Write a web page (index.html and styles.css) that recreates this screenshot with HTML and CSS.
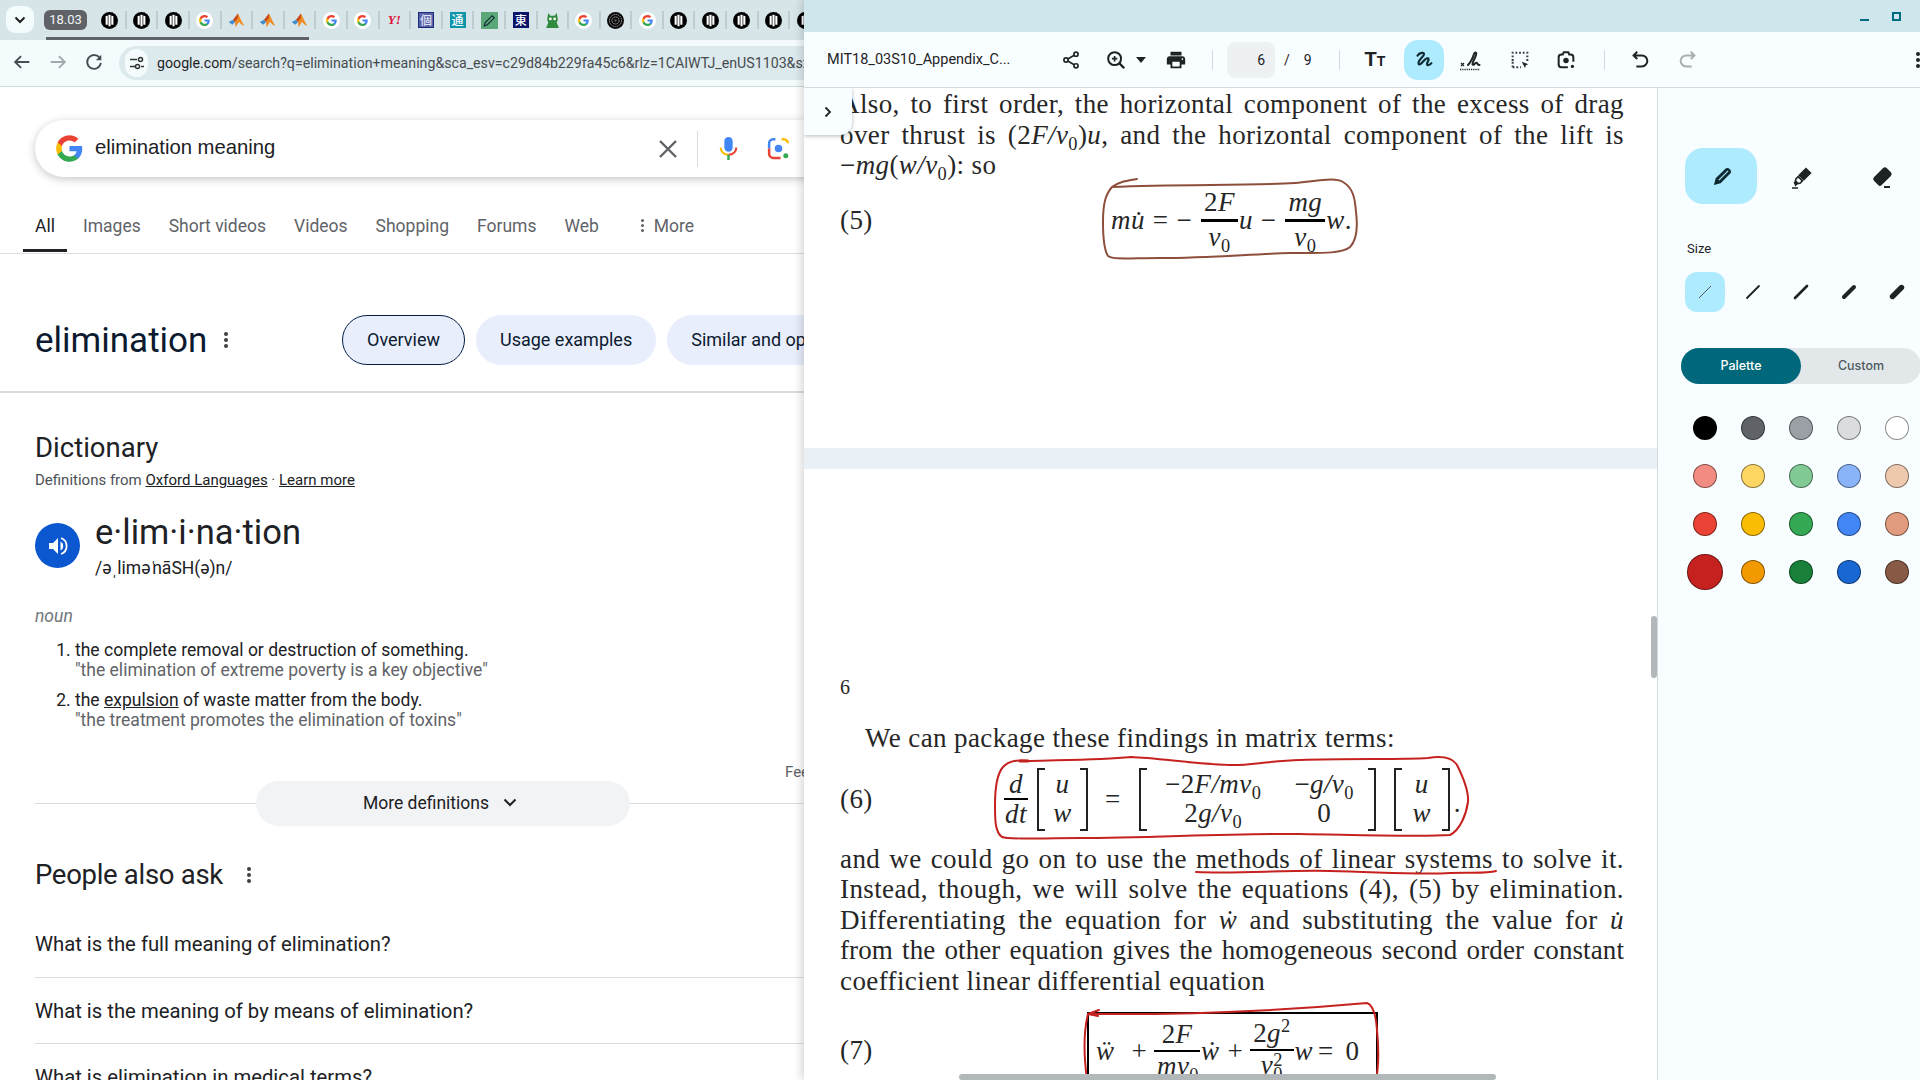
FILE: index.html
```html
<!DOCTYPE html>
<html lang="en">
<head>
    <meta charset="UTF-8">
    <title>elimination meaning</title>
    <link rel="stylesheet" href="styles.css">
</head>
<body>
<svg class="defs" width="0" height="0">
    <symbol id="fav-g" viewBox="0 0 24 24">
        <circle cx="12" cy="12" r="12" fill="#fff"/>
        <g transform="translate(3.6 3.6) scale(.7)">
            <path fill="#4285F4" d="M22.56 12.25c0-.78-.07-1.53-.2-2.25H12v4.26h5.92c-.26 1.37-1.04 2.53-2.21 3.31v2.77h3.57c2.08-1.92 3.28-4.74 3.28-8.09z"/>
            <path fill="#34A853" d="M12 23c2.97 0 5.46-.98 7.28-2.66l-3.57-2.77c-.98.66-2.23 1.06-3.71 1.06-2.86 0-5.29-1.93-6.16-4.53H2.18v2.84C3.99 20.53 7.7 23 12 23z"/>
            <path fill="#FBBC05" d="M5.84 14.09c-.22-.66-.35-1.36-.35-2.09s.13-1.43.35-2.09V7.07H2.18C1.43 8.55 1 10.22 1 12s.43 3.45 1.18 4.93l2.85-2.22.81-.62z"/>
            <path fill="#EA4335" d="M12 5.38c1.62 0 3.06.56 4.21 1.64l3.15-3.15C17.45 2.09 14.97 1 12 1 7.7 1 3.99 3.47 2.18 7.07l3.66 2.84c.87-2.6 3.3-4.53 6.16-4.53z"/>
        </g>
    </symbol>
    <symbol id="logo-g" viewBox="0 0 24 24">
        <path fill="#4285F4" d="M22.56 12.25c0-.78-.07-1.53-.2-2.25H12v4.26h5.92c-.26 1.37-1.04 2.53-2.21 3.31v2.77h3.57c2.08-1.92 3.28-4.74 3.28-8.09z"/>
        <path fill="#34A853" d="M12 23c2.97 0 5.46-.98 7.28-2.66l-3.57-2.77c-.98.66-2.23 1.06-3.71 1.06-2.86 0-5.29-1.93-6.16-4.53H2.18v2.84C3.99 20.53 7.7 23 12 23z"/>
        <path fill="#FBBC05" d="M5.84 14.09c-.22-.66-.35-1.36-.35-2.09s.13-1.43.35-2.09V7.07H2.18C1.43 8.55 1 10.22 1 12s.43 3.45 1.18 4.93l2.85-2.22.81-.62z"/>
        <path fill="#EA4335" d="M12 5.38c1.62 0 3.06.56 4.21 1.64l3.15-3.15C17.45 2.09 14.97 1 12 1 7.7 1 3.99 3.47 2.18 7.07l3.66 2.84c.87-2.6 3.3-4.53 6.16-4.53z"/>
    </symbol>
    <symbol id="fav-bars" viewBox="0 0 24 24">
        <circle cx="12" cy="12" r="12" fill="#000"/>
        <path d="M6.500 6v12h3V5zM10.500 4v16h3V4zM14.500 5v13h3V6z" fill="#fff"/>
    </symbol>
    <symbol id="fav-matlab" viewBox="0 0 24 24">
        <path d="M1 14l6-3 3 3-4 4z" fill="#3f8ecf"/>
        <path d="M7 11l7-9 2 6-6 6z" fill="#c8481c"/>
        <path d="M14 2c3 5 5 12 9 17-3 0-5-2-7-5-2 1-3 4-5 7-1-3-1-5-1-7l4-6z" fill="#ef8b22"/>
    </symbol>
    <symbol id="fav-spiral" viewBox="0 0 24 24">
        <circle cx="12" cy="12" r="12" fill="#050505"/>
        <circle cx="12" cy="12" r="8.500" fill="none" stroke="#aaa" stroke-width="1.400" stroke-dasharray="2 1"/>
        <circle cx="12" cy="12" r="5" fill="none" stroke="#bbb" stroke-width="1.400" stroke-dasharray="2 1"/>
        <circle cx="12" cy="12" r="1.800" fill="#555"/>
    </symbol>
</svg>

<div class="browser">
    <div class="tabstrip">
        <div class="tab-search"><svg width="12" height="8" viewBox="0 0 12 8"><path d="M1.5 1.5L6 6l4.5-4.5" fill="none" stroke="#1f1f1f" stroke-width="2"/></svg></div>
        <div class="tab-group">18.03</div>
        <div class="fav-list">
            <span class="fav"><svg><use href="#fav-bars"/></svg></span>
            <span class="fav"><svg><use href="#fav-bars"/></svg></span>
            <span class="fav"><svg><use href="#fav-bars"/></svg></span>
            <span class="fav"><svg><use href="#fav-g"/></svg></span>
            <span class="fav"><svg><use href="#fav-matlab"/></svg></span>
            <span class="fav"><svg><use href="#fav-matlab"/></svg></span>
            <span class="fav"><svg><use href="#fav-matlab"/></svg></span>
            <span class="fav"><svg><use href="#fav-g"/></svg></span>
            <span class="fav"><svg><use href="#fav-g"/></svg></span>
            <span class="fav"><b class="fav-yahoo">Y!</b></span>
            <span class="fav"><b class="fav-kanji fav-navy-box">個</b></span>
            <span class="fav"><b class="fav-kanji fav-teal">通</b></span>
            <span class="fav"><svg viewBox="0 0 16 16"><rect width="16" height="16" fill="#5aa877"/><path d="M3 13l1-3 6.500-6.500 2 2L6 12z" fill="none" stroke="#123" stroke-width="1"/></svg></span>
            <span class="fav"><b class="fav-kanji fav-navy">東</b></span>
            <span class="fav"><svg viewBox="0 0 16 16"><path d="M4 1l2 2.500h4L12 1l1 6-1 3 2 5H2l2-5-1-3z" fill="#2e8b3d"/><circle cx="6" cy="6.500" r="1.300" fill="#fff"/><circle cx="10" cy="6.500" r="1.300" fill="#fff"/></svg></span>
            <span class="fav"><svg><use href="#fav-g"/></svg></span>
            <span class="fav"><svg><use href="#fav-spiral"/></svg></span>
            <span class="fav"><svg><use href="#fav-g"/></svg></span>
            <span class="fav"><svg><use href="#fav-bars"/></svg></span>
            <span class="fav"><svg><use href="#fav-bars"/></svg></span>
            <span class="fav"><svg><use href="#fav-bars"/></svg></span>
            <span class="fav"><svg><use href="#fav-bars"/></svg></span>
            <span class="fav"><svg><use href="#fav-bars"/></svg></span>
        </div>
        <div class="tab-active-line"></div>
    </div>

    <div class="navbar">
        <svg class="nav-ico" viewBox="0 0 24 24"><path d="M20 12H5M11 5.500L4.500 12l6.500 6.500" fill="none" stroke="#474c50" stroke-width="2"/></svg>
        <svg class="nav-ico" viewBox="0 0 24 24"><path d="M4 12h15M13 5.500l6.500 6.500-6.500 6.500" fill="none" stroke="#a3a9ac" stroke-width="2"/></svg>
        <svg class="nav-ico" viewBox="0 0 24 24"><path d="M18.500 8A7.500 7.500 0 1 0 19.500 13" fill="none" stroke="#474c50" stroke-width="2"/><path d="M20 4v6h-6z" fill="#474c50"/></svg>
        <div class="addr">
            <span class="addr-info"><svg width="16" height="16" viewBox="0 0 16 16"><path d="M1 4.500h7M12 11.500h3M1 11.500h5" stroke="#333" stroke-width="1.500"/><circle cx="11.500" cy="4.500" r="2" fill="none" stroke="#333" stroke-width="1.500"/><circle cx="8.500" cy="11.500" r="2" fill="none" stroke="#333" stroke-width="1.500"/></svg></span>
            <span class="addr-url"><span class="addr-host">google.com</span>/search?q=elimination+meaning&amp;sca_esv=c29d84b229fa45c6&amp;rlz=1CAIWTJ_enUS1103&amp;sxsrf=ADLYWIJ</span>
        </div>
    </div>

    <div class="serp">
        <div class="searchbox">
            <svg class="sb-logo"><use href="#logo-g"/></svg>
            <span class="sb-text">elimination meaning</span>
            <svg class="sb-x" viewBox="0 0 22 22"><path d="M3 3l16 16M19 3L3 19" stroke="#5f6368" stroke-width="2.400"/></svg>
            <span class="sb-div"></span>
            <svg class="sb-ico" viewBox="0 0 24 24"><rect x="8" y="1" width="8" height="14" rx="4" fill="#4285f4"/><path d="M4.500 11c0 4 3.300 7 7.500 7" fill="none" stroke="#fbbc04" stroke-width="2"/><path d="M19.500 11c0 4-3.300 7-7.500 7" fill="none" stroke="#ea4335" stroke-width="2"/><path d="M12 18v5" stroke="#34a853" stroke-width="2.400"/></svg>
            <svg class="sb-ico sb-lens" viewBox="0 0 24 24"><path d="M3 12V7a4 4 0 0 1 4-4h2" fill="none" stroke="#4285f4" stroke-width="2.400"/><path d="M15 3h2a4 4 0 0 1 4 4" fill="none" stroke="#fbbc04" stroke-width="2.400"/><path d="M3 12v5a4 4 0 0 0 4 4h7" fill="none" stroke="#ea4335" stroke-width="2.400"/><circle cx="12" cy="12" r="3.600" fill="#4285f4"/><circle cx="19" cy="19" r="2.400" fill="#34a853"/></svg>
        </div>

        <div class="navtabs">
            <span class="navtab navtab-on">All</span>
            <span class="navtab">Images</span>
            <span class="navtab">Short videos</span>
            <span class="navtab">Videos</span>
            <span class="navtab">Shopping</span>
            <span class="navtab">Forums</span>
            <span class="navtab">Web</span>
            <span class="navtab navtab-more"><i class="dots dots-grey"></i>More</span>
        </div>

        <div class="headrow">
            <div class="head-title">
                <h1>elimination</h1>
                <i class="dots"></i>
            </div>
            <span class="chip chip-on">Overview</span>
            <span class="chip">Usage examples</span>
            <span class="chip">Similar and opposite words</span>
        </div>
        <div class="head-rule"></div>

        <div class="section">
            <h2>Dictionary</h2>
            <div class="source">Definitions from <u>Oxford Languages</u> · <u>Learn more</u></div>
            <div class="entry">
                <span class="speaker"><svg width="24" height="24" viewBox="0 0 24 24"><path d="M3 9v6h4l5 5V4L7 9z" fill="#fff"/><path d="M14.500 7.500a5 5 0 0 1 0 9z" fill="#fff"/><path d="M15 4a8.500 8.500 0 0 1 0 16" fill="none" stroke="#fff" stroke-width="1.800"/></svg></span>
                <div>
                    <div class="word">e·lim·i·na·tion</div>
                    <div class="phonetic">/əˌlimə<span class="stress">ˈ</span>nāSH(ə)n/</div>
                </div>
            </div>
            <div class="pos">noun</div>
            <ol class="defs-list">
                <li>the complete removal or destruction of something.<span class="example">"the elimination of extreme poverty is a key objective"</span></li>
                <li>the <u>expulsion</u> of waste matter from the body.<span class="example">"the treatment promotes the elimination of toxins"</span></li>
            </ol>
            <div class="feedback">Feedback</div>
            <div class="more-row">
                <span class="more-pill">More definitions <svg width="14" height="9" viewBox="0 0 14 9"><path d="M1.500 1.500L7 7l5.500-5.500" fill="none" stroke="#202124" stroke-width="2"/></svg></span>
            </div>

            <h2 class="paa-title">People also ask <i class="dots"></i></h2>
            <div class="paa-q">What is the full meaning of elimination?</div>
            <div class="paa-q">What is the meaning of by means of elimination?</div>
            <div class="paa-q">What is elimination in medical terms?</div>
        </div>
    </div>
</div>

<div class="pdfapp">
    <div class="titlebar">
        <span class="win-min"></span>
        <span class="win-max"></span>
    </div>
    <div class="pdfbar">
        <span class="doc-name">MIT18_03S10_Appendix_C...</span>
        <span class="tb-btn"><svg viewBox="0 0 24 24" width="20" height="20"><circle cx="18" cy="5" r="2.500" fill="none" stroke="#1f2326" stroke-width="2"/><circle cx="6" cy="12" r="2.500" fill="none" stroke="#1f2326" stroke-width="2"/><circle cx="18" cy="19" r="2.500" fill="none" stroke="#1f2326" stroke-width="2"/><path d="M8.200 10.700l7.600-4.400M8.200 13.300l7.600 4.400" stroke="#1f2326" stroke-width="2"/></svg></span>
        <span class="tb-btn tb-zoom"><svg viewBox="0 0 24 24" width="22" height="22"><circle cx="10.500" cy="10.500" r="7" fill="none" stroke="#1f2326" stroke-width="2.200"/><path d="M15.500 15.500L21 21" stroke="#1f2326" stroke-width="2.600"/><path d="M7.500 10.500h6M10.500 7.500v6" stroke="#1f2326" stroke-width="1.800"/></svg></span>
        <span class="tb-caret"></span>
        <span class="tb-btn tb-print"><svg viewBox="0 0 24 24" width="22" height="22"><path fill="#1f2326" d="M19 8H5c-1.660 0-3 1.340-3 3v6h4v4h12v-4h4v-6c0-1.660-1.340-3-3-3zm-3 11H8v-5h8v5zm3-7c-.55 0-1-.45-1-1s.45-1 1-1 1 .45 1 1-.45 1-1 1zm-1-9H6v4h12V3z"/></svg></span>
        <span class="tb-sep tb-sep1"></span>
        <span class="page-box">6</span>
        <span class="page-total"><span>/</span><span>9</span></span>
        <span class="tb-sep tb-sep1"></span>
        <span class="tb-btn tb-text"><span class="tt-big">T</span><span class="tt-small">T</span></span>
        <span class="tb-btn tb-active"><svg viewBox="0 0 24 24" width="26" height="26"><path d="M6 8c2-3 6-3.500 6-1.500 0 3-6 5-5 9 .8 2 4-2 6-4 2-2 4-1 3 1-1 2-2 4-.2 4.200 1 .1 2-.7 3-1.700" fill="none" stroke="#0f2a33" stroke-width="2" stroke-linecap="round"/></svg></span>
        <span class="tb-btn tb-sign"><svg viewBox="0 0 24 24" width="24" height="24"><path d="M10 17c3-3 5-8 6-11 .8-2.500 2.800-2 2 1-.8 3.500-4 7-3.500 9.500 1 1.500 3-2.500 4.500-1.500 1 .8.500 2 2.500 2" fill="none" stroke="#1f2326" stroke-width="2" stroke-linecap="round"/><path d="M3 15l3 3M6 15l-3 3" stroke="#1f2326" stroke-width="1.200"/><path d="M2 21.500h20" stroke="#1f2326" stroke-width="1.500" stroke-dasharray="1.200 1"/></svg></span>
        <span class="tb-btn tb-select"><svg viewBox="0 0 24 24" width="22" height="22"><path d="M4 13V4h16v9M4 20h9" fill="none" stroke="#3a3f43" stroke-width="2.200" stroke-dasharray="2 2"/><path d="M14 14l7 2.500-2.600 1.200-1 3z" fill="#1f2326"/><path d="M4 14v6" stroke="#3a3f43" stroke-width="2.200" stroke-dasharray="2 2"/></svg></span>
        <span class="tb-btn tb-cam"><svg viewBox="0 0 24 24" width="22" height="22"><path d="M14 20H7a3 3 0 0 1-3-3V9a3 3 0 0 1 3-3h1.500l1-2.500h5l1 2.500H17a3 3 0 0 1 3 3v5" fill="none" stroke="#1f2326" stroke-width="2.200"/><circle cx="12" cy="12.500" r="3" fill="#1f2326"/><circle cx="19" cy="19" r="1.800" fill="#1f2326"/></svg></span>
        <span class="tb-sep tb-sep2"></span>
        <span class="tb-btn tb-undo"><svg viewBox="0 0 24 24" width="22" height="22"><path d="M9 3L5 7l4 4M5 7h9a5.500 5.500 0 0 1 0 12H8" fill="none" stroke="#1f2326" stroke-width="2.200"/></svg></span>
        <span class="tb-btn tb-redo"><svg viewBox="0 0 24 24" width="22" height="22"><path d="M15 3l4 4-4 4M19 7h-9a5.500 5.500 0 0 0 0 12h6" fill="none" stroke="#a9aeb1" stroke-width="2.200"/></svg></span>
        <i class="dots tb-more"></i>
    </div>

    <div class="pdfmain">
        <div class="pdfview">
            <div class="page page-one">
                <div class="ln">Also, to first order, the horizontal component of the excess of drag</div>
                <div class="ln">over thrust is (2<em>F/v</em><sub>0</sub>)<em>u</em>, and the horizontal component of the lift is</div>
                <div class="ln ln-plain">−<em>mg</em>(<em>w/v</em><sub>0</sub>): so</div>
                <div class="eq eq5">
                    <span class="eq-num">(5)</span>
                    <div class="eq-body">
                        <span><em>mu̇</em></span>
                        <span class="op">=</span>
                        <span class="op-tight">−</span>
                        <span class="frac frac-bold"><span>2<em>F</em></span><span><em>v</em><sub>0</sub></span></span>
                        <em>u</em>
                        <span class="op">−</span>
                        <span class="frac frac-bold"><span><em>mg</em></span><span><em>v</em><sub>0</sub></span></span>
                        <span><em>w</em>.</span>
                    </div>
                </div>
            </div>

            <div class="page page-two">
                <div class="pagenum">6</div>
                <div class="ln ln-plain ln-indent">We can package these findings in matrix terms:</div>
                <div class="eq eq6">
                    <span class="eq-num">(6)</span>
                    <div class="eq-body">
                        <span class="frac frac-d"><span><em>d</em></span><span><em>dt</em></span></span>
                        <span class="matrix m-small"><span><em>u</em></span><span><em>w</em></span></span>
                        <span class="op op-wide">=</span>
                        <span class="matrix m-wide">
                            <span class="mcol mcol-a"><span>−2<em>F/mv</em><sub>0</sub></span><span>2<em>g/v</em><sub>0</sub></span></span>
                            <span class="mcol mcol-b"><span>−<em>g/v</em><sub>0</sub></span><span>0</span></span>
                        </span>
                        <span class="matrix m-small m-last"><span><em>u</em></span><span><em>w</em></span></span>
                        <span class="mdot">.</span>
                    </div>
                </div>
                <div class="ln">and we could go on to use the methods of linear systems to solve it.</div>
                <div class="ln">Instead, though, we will solve the equations (4), (5) by elimination.</div>
                <div class="ln">Differentiating the equation for <em>ẇ</em> and substituting the value for <em>u̇</em></div>
                <div class="ln ln-tight">from the other equation gives the homogeneous second order constant</div>
                <div class="ln ln-plain">coefficient linear differential equation</div>
                <div class="eq eq7">
                    <span class="eq-num">(7)</span>
                    <div class="eq-body">
                        <em>ẅ</em>
                        <span class="op op-a">+</span>
                        <span class="frac frac-a"><span>2<em>F</em></span><span><em>mv</em><sub>0</sub></span></span>
                        <em>ẇ</em>
                        <span class="op op-b">+</span>
                        <span class="frac"><span>2<em>g</em><sup>2</sup></span><span><em>v</em><span class="subsup"><sup>2</sup><sub>0</sub></span></span></span>
                        <em>w</em>
                        <span class="op op-c">=</span>
                        <span>0</span>
                    </div>
                </div>
            </div>

            <svg class="ink" viewBox="804 88 853 992">
                <g fill="none" stroke-linecap="round" stroke-linejoin="round">
                    <path stroke="#8d4f3c" stroke-width="2" d="M1137 179C1126 181 1118 182 1112 187C1105 195 1103 205 1103 222C1103 235 1104 250 1108 256C1114 260 1130 258 1160 258C1210 258 1250 254 1290 253C1320 253 1342 254 1350 247C1356 241 1358 228 1356 212C1355 198 1353 188 1343 182C1335 177 1318 181 1295 183C1250 186 1180 184 1112 187"/>
                    <path stroke="#c5221f" stroke-width="2" d="M1030 761C1022 760 1010 759 1003 767C996 775 995 790 995 805C995 820 995 832 1002 837C1010 840 1040 838 1080 838C1150 838 1230 833 1300 834C1360 835 1420 837 1450 835C1460 830 1466 815 1468 802C1469 790 1462 775 1457 765C1452 757 1440 756 1428 758C1400 760 1350 758 1300 760C1270 761 1250 765 1235 765C1200 765 1160 758 1131 757C1100 760 1060 760 1030 761"/>
                    <path stroke="#c5221f" stroke-width="3" d="M1020 761h8"/>
                    <path stroke="#c5221f" stroke-width="2" d="M1196 872C1240 874 1280 870 1330 871C1380 872 1420 875 1450 873C1470 872 1485 874 1496 871"/>
                    <path stroke="#c5221f" stroke-width="2" d="M1099 1010L1088 1014L1098 1016M1088 1014C1200 1015 1290 1010 1367 1003C1373 1005 1376 1015 1377 1030C1379 1050 1379 1065 1376 1080M1088 1014C1084 1030 1083 1050 1087 1080"/>
                </g>
            </svg>

            <div class="collapse-tab"><svg width="10" height="12" viewBox="0 0 10 12"><path d="M2.500 1.500L7 6l-4.500 4.500" fill="none" stroke="#1f2326" stroke-width="1.800"/></svg></div>
            <div class="hscroll"></div>
            <div class="vscroll"></div>
        </div>

        <div class="sidepanel">
            <div class="tools">
                <span class="tool tool-on"><svg viewBox="0 0 24 24" width="24" height="24"><g transform="rotate(45 12 12)"><path d="M8.500 3a3.500 3.500 0 0 1 7 0v13l-3.500 6-3.500-6z" fill="#0f2a33"/><path d="M12.600 2v13h-1.200V2z" fill="#aeebff"/></g></svg></span>
                <span class="tool"><svg viewBox="0 0 24 24" width="24" height="24"><g transform="rotate(45 12 12)"><path d="M8 1h8v11H8z" fill="#1f2326"/><path d="M9 13h6v3l-1 2h-4l-1-2z" fill="none" stroke="#1f2326" stroke-width="1.600"/><path d="M10 18h4v4l-4-1.500z" fill="#1f2326"/></g><path d="M3 22h6" stroke="#1f2326" stroke-width="1.500"/></svg></span>
                <span class="tool"><svg viewBox="0 0 24 24" width="24" height="24"><g transform="rotate(45 12 12)"><rect x="6.500" y="1" width="11" height="18" rx="2.500" fill="#1f2326"/></g><path d="M15 21h6" stroke="#1f2326" stroke-width="2"/></svg></span>
            </div>
            <div class="size-label">Size</div>
            <div class="sizes">
                <span class="size size-on"><svg width="16" height="16" viewBox="0 0 16 16"><path d="M2 14L14 2" stroke="#4d5a60" stroke-width="1"/></svg></span>
                <span class="size"><svg width="16" height="16" viewBox="0 0 16 16"><path d="M2 14L14 2" stroke="#1f2326" stroke-width="1.800" stroke-linecap="round"/></svg></span>
                <span class="size"><svg width="16" height="16" viewBox="0 0 16 16"><path d="M2 14L14 2" stroke="#1f2326" stroke-width="2.600" stroke-linecap="round"/></svg></span>
                <span class="size"><svg width="16" height="16" viewBox="0 0 16 16"><path d="M3 13L13 3" stroke="#1f2326" stroke-width="4" stroke-linecap="round"/></svg></span>
                <span class="size"><svg width="16" height="16" viewBox="0 0 16 16"><path d="M3.500 12.500l9-9" stroke="#1f2326" stroke-width="5.400" stroke-linecap="round"/></svg></span>
            </div>
            <div class="segment">
                <span class="seg seg-on">Palette</span>
                <span class="seg">Custom</span>
            </div>
            <div class="palette">
                <span class="swatch c-black"></span><span class="swatch c-g1"></span><span class="swatch c-g2"></span><span class="swatch c-g3"></span><span class="swatch c-white"></span>
                <span class="swatch c-r1"></span><span class="swatch c-y1"></span><span class="swatch c-gr1"></span><span class="swatch c-b1"></span><span class="swatch c-s1"></span>
                <span class="swatch c-r2"></span><span class="swatch c-y2"></span><span class="swatch c-gr2"></span><span class="swatch c-b2"></span><span class="swatch c-s2"></span>
                <span class="swatch c-r3 swatch-on"></span><span class="swatch c-y3"></span><span class="swatch c-gr3"></span><span class="swatch c-b3"></span><span class="swatch c-s3"></span>
            </div>
        </div>
    </div>
</div>
</body>
</html>
```

FILE: styles.css
```css
* {
    margin: 0;
    padding: 0;
    box-sizing: border-box;
}

html, body {
    width: 1920px;
    height: 1080px;
    overflow: hidden;
}

body {
    display: flex;
    font-family: "Liberation Sans", "Noto Sans CJK SC", sans-serif;
    color: #202124;
    background: #fff;
}

.defs {
    position: absolute;
}

.dots {
    display: inline-block;
    width: 4px;
    height: 4px;
    border-radius: 50%;
    background: #3c4043;
    box-shadow: 0 -6px 0 #3c4043, 0 6px 0 #3c4043;
}

.dots-grey {
    background: #5f6368;
    box-shadow: 0 -5px 0 #5f6368, 0 5px 0 #5f6368;
    width: 3px;
    height: 3px;
}

/* left browser window */
.browser {
    width: 804px;
    flex: none;
    display: flex;
    flex-direction: column;
    overflow: hidden;
}

.tabstrip {
    height: 40px;
    flex: none;
    background: #d7e5e9;
    display: flex;
    padding: 6px 0 0 6px;
    position: relative;
}

.tab-search {
    width: 28px;
    height: 27px;
    flex: none;
    background: #f4fbfd;
    border-radius: 9px;
    display: flex;
    align-items: center;
    justify-content: center;
}

.tab-group {
    width: 43px;
    height: 20px;
    flex: none;
    margin: 4px 0 0 10px;
    background: #5f6368;
    border-radius: 6px;
    color: #f1f3f4;
    font-family: Roboto, sans-serif;
    font-size: 13px;
    line-height: 20px;
    text-align: center;
}

.fav-list {
    display: flex;
    flex: none;
    margin: 3px 0 0 8.200px;
}

.fav {
    width: 31.600px;
    height: 18px;
    margin-top: 2px;
    flex: none;
    display: flex;
    align-items: center;
    justify-content: center;
    border-right: 2px solid #bfcccf;
}

.fav svg {
    width: 17px;
    height: 17px;
}

.fav-yahoo {
    color: #e0103a;
    font-family: "Liberation Serif", serif;
    font-size: 13px;
    font-style: italic;
}

.fav-kanji {
    width: 16px;
    height: 16px;
    display: block;
    font-family: "Noto Sans CJK JP", sans-serif;
    font-size: 12px;
    line-height: 16px;
    text-align: center;
    font-weight: 500;
    color: #fff;
}

.fav-navy-box {
    background: #5a62a8;
    color: #dfe3f5;
    border: 1px solid #1b2a7a;
    line-height: 14px;
}

.fav-teal {
    background: #0f95aa;
}

.fav-navy {
    background: #0a1468;
}

.tab-active-line {
    position: absolute;
    left: 46px;
    top: 37px;
    width: 263px;
    height: 3px;
    background: #5f6368;
}

.navbar {
    height: 47px;
    flex: none;
    background: #f4fbfd;
    border-bottom: 1px solid #cfdadd;
    display: flex;
    align-items: center;
    padding: 0 0 2px 11px;
}

.nav-ico {
    width: 22px;
    height: 22px;
    flex: none;
    margin-right: 14px;
}

.addr {
    flex: none;
    width: 760px;
    height: 34px;
    margin-top: 1px;
    border-radius: 17px;
    background: #dce9ed;
    display: flex;
    align-items: center;
    padding-left: 6px;
    white-space: nowrap;
    overflow: hidden;
}

.addr-info {
    width: 23px;
    height: 28px;
    border-radius: 14px;
    background: #f4fbfd;
    flex: none;
    display: flex;
    align-items: center;
    justify-content: center;
    margin-right: 9px;
}

.addr-url {
    font-family: Roboto, sans-serif;
    font-size: 14.200px;
    margin-top: 1px;
    color: #474c50;
}

.addr-host {
    color: #1f1f1f;
}

/* google results */
.serp {
    flex: 1;
    overflow: hidden;
    background: #fff;
    min-height: 0;
}

.searchbox {
    width: 800px;
    height: 57px;
    margin: 33px 0 0 35px;
    border-radius: 29px;
    background: #fff;
    box-shadow: 0 2px 8px rgba(32, 33, 36, 0.26);
    display: flex;
    align-items: center;
    padding: 0 44px 0 20px;
}

.sb-logo {
    width: 29px;
    height: 29px;
    flex: none;
}

.sb-text {
    flex: 1;
    margin: -2px 0 0 11px;
    font-size: 20.300px;
}

.sb-x {
    width: 22px;
    height: 22px;
    flex: none;
}

.sb-div {
    width: 1px;
    height: 36px;
    margin: 0 18px;
    background: #dadce0;
}

.sb-ico {
    width: 25px;
    height: 27px;
    flex: none;
}

.sb-lens {
    margin-left: 25px;
}

.navtabs {
    height: 49px;
    margin-top: 28px;
    padding: 0 0 7px 35px;
    display: flex;
    gap: 28px;
    align-items: center;
    border-bottom: 1px solid #dadce0;
    font-family: Roboto, sans-serif;
    font-size: 17.500px;
    color: #5f6368;
}

.navtab {
    position: relative;
}

.navtab-on {
    color: #202124;
}

.navtab-on::after {
    content: "";
    position: absolute;
    left: -12px;
    right: -12px;
    top: 33px;
    height: 3px;
    background: #202124;
}

.navtab-more {
    margin-left: 14px;
    display: flex;
    align-items: center;
    gap: 10px;
}

.headrow {
    margin-top: 61px;
    height: 50px;
    display: flex;
    align-items: center;
    gap: 11px;
    padding-left: 35px;
    white-space: nowrap;
}

.head-title {
    width: 296px;
    display: flex;
    align-items: center;
    gap: 17px;
    flex: none;
}

h1 {
    font-weight: 400;
    font-size: 35px;
    font-family: Roboto, sans-serif;
    color: #0c1a30;
}

.chip {
    height: 50px;
    padding: 0 24px;
    border-radius: 25px;
    background: #e8eefc;
    flex: none;
    font-family: Roboto, sans-serif;
    font-size: 18px;
    line-height: 50px;
    color: #0c1a30;
}

.chip-on {
    border: 1px solid #041e49;
    line-height: 48px;
}

.head-rule {
    margin-top: 26px;
    height: 2px;
    background: #dadce0;
}

.section {
    padding-left: 35px;
    width: 804px;
}

h2 {
    font-weight: 400;
    font-family: Roboto, sans-serif;
    font-size: 27.500px;
    line-height: 36px;
    margin-top: 37px;
}

.source {
    margin-top: 4px;
    font-family: Roboto, sans-serif;
    font-size: 15px;
    line-height: 20px;
    color: #4d5156;
}

.source u {
    color: #202124;
}

.entry {
    margin-top: 20px;
    display: flex;
    gap: 15px;
}

.speaker {
    width: 45px;
    height: 45px;
    margin-top: 13px;
    border-radius: 50%;
    background: #0b57d0;
    flex: none;
    display: flex;
    align-items: center;
    justify-content: center;
}

.word {
    font-family: Roboto, sans-serif;
    font-size: 34.500px;
    line-height: 44px;
}

.phonetic {
    font-family: Roboto, sans-serif;
    font-size: 17.500px;
    line-height: 28px;
}

.stress {
    letter-spacing: -4px;
}

.pos {
    margin-top: 22px;
    font-family: Roboto, sans-serif;
    font-size: 17.500px;
    line-height: 24px;
    font-style: italic;
    color: #70757a;
}

.defs-list {
    margin-top: 12px;
    padding-left: 40px;
    font-family: Roboto, sans-serif;
    font-size: 17.500px;
    line-height: 20px;
}

.defs-list li {
    margin-bottom: 10px;
}

.example {
    display: block;
    color: #5f6368;
}

.feedback {
    margin: 32px 0 0 750px;
    height: 20px;
    white-space: nowrap;
    font-family: Roboto, sans-serif;
    font-size: 15px;
    line-height: 20px;
    color: #5f6368;
}

.more-row {
    margin: -1px 0 0 0;
    height: 45px;
    background: linear-gradient(#dadce0, #dadce0) center / 100% 1px no-repeat;
}

.more-pill {
    display: flex;
    align-items: center;
    justify-content: center;
    gap: 14px;
    width: 374px;
    height: 45px;
    margin-left: 221px;
    padding: 0 6px 2px 0;
    border-radius: 23px;
    background: #f1f3f4;
    font-family: Roboto, sans-serif;
    font-size: 17.500px;
}

.paa-title {
    margin-top: 31px;
    display: flex;
    align-items: center;
    gap: 24px;
    letter-spacing: -0.300px;
}

.paa-q {
    margin-top: 18px;
    height: 67px;
    line-height: 66px;
    font-family: Roboto, sans-serif;
    font-size: 20.300px;
    border-bottom: 1px solid #dadce0;
}

.paa-q + .paa-q {
    margin-top: 0;
    height: 66px;
}

/* pdf window */
.pdfapp {
    flex: 1;
    min-width: 0;
    display: flex;
    flex-direction: column;
    overflow: hidden;
    position: relative;
    box-shadow: -3px 0 8px rgba(0, 0, 0, 0.15);
    z-index: 2;
}

.titlebar {
    height: 32px;
    flex: none;
    background: #cfe6ed;
    display: flex;
    justify-content: flex-end;
    padding: 12px 19px 0 0;
}

.win-min {
    width: 9px;
    height: 2px;
    margin: 7px 23px 0 0;
    background: #006a80;
}

.win-max {
    width: 9px;
    height: 9px;
    border: 2px solid #006a80;
}

.pdfbar {
    height: 56px;
    flex: none;
    background: #f8fdff;
    border-bottom: 1px solid #d3dadd;
    display: flex;
    align-items: center;
    padding-left: 23px;
    color: #1f2326;
    white-space: nowrap;
}

.doc-name {
    width: 224px;
    flex: none;
    font-family: Roboto, sans-serif;
    font-size: 14.500px;
}

.tb-btn {
    width: 40px;
    height: 40px;
    flex: none;
    display: flex;
    align-items: center;
    justify-content: center;
}

.tb-zoom {
    margin-left: 5px;
}

.tb-caret {
    width: 0;
    height: 0;
    border-left: 5px solid transparent;
    border-right: 5px solid transparent;
    border-top: 6px solid #1f2326;
    flex: none;
}

.tb-print {
    margin-left: 10px;
}

.tb-sep {
    width: 1px;
    height: 20px;
    flex: none;
    background: #d3dadd;
}

.tb-sep1 {
    margin: 0 14px 0 16px;
}

.page-box {
    width: 48px;
    height: 36px;
    flex: none;
    border-radius: 8px;
    background: #edf1f4;
    font-family: Roboto, sans-serif;
    font-size: 14px;
    line-height: 36px;
    text-align: right;
    padding-right: 10px;
}

.page-total {
    width: 48px;
    flex: none;
    display: flex;
    gap: 14px;
    padding-left: 9px;
    font-family: Roboto, sans-serif;
    font-size: 14px;
}

.tb-text {
    margin-left: 1px;
    font-weight: 700;
    align-items: baseline;
    padding-top: 8px;
}

.tt-big {
    font-size: 20px;
}

.tt-small {
    font-size: 14px;
}

.tb-active {
    height: 40px;
    margin-left: 9px;
    border-radius: 14px;
    background: #aeebff;
}

.tb-sign {
    margin-left: 6px;
}

.tb-select {
    margin-left: 10px;
}

.tb-cam {
    margin-left: 6px;
}

.tb-sep2 {
    margin: 0 15px 0 18px;
}

.tb-redo {
    margin-left: 8px;
}

.tb-more {
    margin-left: 208px;
    background: #1f2326;
    box-shadow: 0 -6px 0 #1f2326, 0 6px 0 #1f2326;
}

.pdfmain {
    flex: 1;
    min-height: 0;
    display: flex;
}

.pdfview {
    width: 853px;
    flex: none;
    position: relative;
    overflow: hidden;
    background: #e9f1f7;
    font-family: "Liberation Serif", serif;
    font-size: 27px;
    letter-spacing: 0.400px;
    color: #262626;
}

.page {
    background: #fff;
    padding-left: 36px;
    padding-right: 33px;
}

.page em {
    font-style: italic;
}

.page sub, .page sup {
    font-size: 0.680em;
    line-height: 0;
}

.page-one {
    height: 360px;
    padding-top: 1px;
}

.page-two {
    height: 611px;
    margin-top: 21px;
    padding-top: 203px;
}

.ln {
    height: 30.500px;
    line-height: 30.500px;
    text-align: justify;
    text-align-last: justify;
}

.ln-plain {
    text-align-last: left;
}

.ln-tight {
    letter-spacing: 0.100px;
}

.ln-indent {
    margin-top: 21px;
    padding-left: 25px;
}

.pagenum {
    font-size: 20px;
    line-height: 30px;
}

.eq {
    display: flex;
    align-items: center;
}

.eq-num {
    flex: none;
    width: 40px;
}

.eq-body {
    display: flex;
    align-items: center;
    white-space: nowrap;
    flex: none;
}

.eq5 {
    height: 80px;
}

.eq5 .eq-body {
    margin-left: 231px;
}

.eq6 {
    height: 85px;
    margin: 3px 0 2px;
}

.eq6 .eq-body {
    margin-left: 123px;
}

.eq7 {
    margin-top: 16px;
    height: 76px;
}

.eq7 .eq-body {
    width: 291px;
    height: 120px;
    align-self: flex-start;
    margin-left: 207px;
    padding: 0 0 44px 7px;
    border: 2px solid #000;
    border-bottom: 0;
}

.op {
    margin: 0 8px;
}

.op-wide {
    margin: 0 18px 0 17px;
}

.op-tight {
    margin-right: 8px;
}

.eq7 .op-a {
    margin: 0 6px 0 17px;
}

.eq7 .op-b {
    margin: 0 6px 0 8px;
}

.eq7 .op-c {
    margin: 0 12px 0 5px;
}

.mdot {
    margin-top: 8px;
}

.frac {
    display: inline-flex;
    flex-direction: column;
    text-align: center;
    margin: 0 1px;
}

.frac > span {
    line-height: 28px;
    padding: 0 3px 2px;
}

.frac > span:first-child {
    border-bottom: 2px solid #000;
}

.frac-a {
    width: 46px;
}

.frac-d {
    width: 24px;
}

.frac-d > span {
    padding: 0;
}

.frac-bold > span {
    line-height: 30px;
    min-width: 34px;
}

.frac-bold > span:first-child {
    border-bottom: 3px solid #000;
}

.subsup {
    display: inline-flex;
    flex-direction: column;
    vertical-align: middle;
    font-size: 0.680em;
    line-height: 14px;
}

.subsup sup, .subsup sub {
    font-size: 1em;
    line-height: 14px;
    vertical-align: baseline;
}

.matrix {
    display: inline-flex;
    flex-direction: column;
    justify-content: center;
    align-items: center;
    height: 63px;
    margin-left: 8px;
    line-height: 29px;
    position: relative;
    border-left: 2px solid #222;
    border-right: 2px solid #222;
    flex: none;
}

.m-small {
    width: 51px;
}

.m-wide {
    flex-direction: row;
    justify-content: flex-start;
    width: 237px;
    margin-left: 0;
}

.m-last {
    width: 56px;
    margin-left: 18px;
    margin-right: 4px;
}

.matrix::before, .matrix::after {
    content: "";
    position: absolute;
    left: 0;
    right: 0;
    height: 2px;
    background: linear-gradient(90deg, #222 6px, transparent 6px, transparent calc(100% - 6px), #222 calc(100% - 6px));
}

.matrix::before {
    top: 0;
}

.matrix::after {
    bottom: 0;
}

.mcol {
    display: flex;
    flex-direction: column;
    align-items: center;
}

.mcol-a {
    width: 145px;
}

.mcol-b {
    width: 77px;
}

.ink {
    position: absolute;
    left: 0;
    top: 0;
    width: 853px;
    height: 992px;
    pointer-events: none;
}

.collapse-tab {
    position: absolute;
    left: 0;
    top: 0;
    width: 48px;
    height: 47px;
    background: #f8fdff;
    border-radius: 0 0 12px 0;
    box-shadow: 0 1px 4px rgba(0, 0, 0, 0.28);
    display: flex;
    align-items: center;
    justify-content: center;
}

.hscroll {
    position: absolute;
    left: 155px;
    bottom: 0;
    width: 537px;
    height: 6px;
    border-radius: 3px;
    background: #b2b7ba;
}

.vscroll {
    position: absolute;
    right: 0;
    top: 528px;
    width: 6px;
    height: 62px;
    border-radius: 3px;
    background: #b2b7ba;
}

.sidepanel {
    flex: 1;
    border-left: 1px solid #d3dadd;
    background: #f8fdff;
    padding: 60px 0 0 24px;
}

.tools {
    display: flex;
    gap: 8px;
    height: 56px;
    margin-left: 3px;
}

.tool {
    width: 72px;
    height: 56px;
    border-radius: 18px;
    display: flex;
    align-items: center;
    justify-content: center;
}

.tool svg {
    margin: 3px 1px 0 0;
}

.tool-on {
    background: #aeebff;
}

.size-label {
    margin: 35px 0 0 5px;
    font-family: Roboto, sans-serif;
    font-size: 13px;
    line-height: 20px;
    color: #1f2326;
}

.sizes {
    margin: 13px 0 0 3px;
    display: flex;
    gap: 8px;
}

.size {
    width: 40px;
    height: 40px;
    border-radius: 12px;
    display: flex;
    align-items: center;
    justify-content: center;
}

.size-on {
    background: #aeebff;
}

.segment {
    margin: 36px 0 0 -1px;
    width: 240px;
    height: 36px;
    border-radius: 18px;
    background: #e2e7ea;
    display: flex;
    font-family: Inter, sans-serif;
    font-size: 12.500px;
    font-weight: 500;
    line-height: 36px;
    text-align: center;
    color: #4d5a60;
}

.seg {
    flex: 1;
}

.seg-on {
    border-radius: 18px;
    background: #00687a;
    color: #fff;
}

.palette {
    margin: 24px 0 0 3px;
    display: grid;
    grid-template-columns: repeat(5, 40px);
    column-gap: 8px;
    row-gap: 8px;
}

.swatch {
    width: 24px;
    height: 24px;
    margin: 8px;
    border-radius: 50%;
    border: 1px solid rgba(0, 0, 0, 0.45);
}

.swatch-on {
    width: 36px;
    height: 36px;
    margin: 2px;
}

.c-black { background: #000; }
.c-g1 { background: #5f6368; }
.c-g2 { background: #9aa0a6; }
.c-g3 { background: #dadce0; }
.c-white { background: #fff; }
.c-r1 { background: #f28b82; }
.c-y1 { background: #fdd663; }
.c-gr1 { background: #81c995; }
.c-b1 { background: #8ab4f8; }
.c-s1 { background: #eec9ae; }
.c-r2 { background: #ea4335; }
.c-y2 { background: #fbbc04; }
.c-gr2 { background: #34a853; }
.c-b2 { background: #4285f4; }
.c-s2 { background: #e19b7e; }
.c-r3 { background: #c5221f; }
.c-y3 { background: #f29900; }
.c-gr3 { background: #188038; }
.c-b3 { background: #1967d2; }
.c-s3 { background: #885945; }
```
